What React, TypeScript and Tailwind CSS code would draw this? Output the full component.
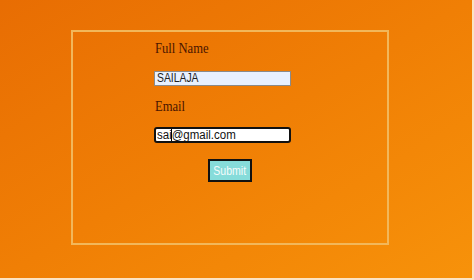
export default function App() {
  return (
    <div className="w-[474px] h-[280px] bg-[#fbe3c4] overflow-hidden">
      <div className="w-[472px] h-[278px] bg-gradient-to-br from-[#e86d03] via-[#f07f05] to-[#f7920a] pt-[30px] pl-[71px]">
        <div className="w-[318px] h-[215px] border-2 border-[#f2b75a] pl-[82px] pt-[8px] font-['Liberation_Serif',serif]">
          <div className="text-[14px] leading-[17px] text-[#4a1500] origin-left scale-x-[0.9]">Full Name</div>
          <div className="mt-[14px] -ml-[1px] w-[137px] h-[15px] bg-[#e8f0fe] border border-[#8a8a8a] flex items-center px-[2px]">
            <span className="font-['Liberation_Sans',sans-serif] text-[12.5px] leading-none text-[#222] origin-left scale-x-[0.83] inline-block">SAILAJA</span>
          </div>
          <div className="mt-[12px] text-[14px] leading-[17px] text-[#4a1500] origin-left scale-x-[0.9]">Email</div>
          <div className="mt-[12px] -ml-[1px] w-[137px] h-[16px] bg-white border-2 border-[#111] rounded-[3px] flex items-center px-[1px] relative">
            <span className="font-['Liberation_Sans',sans-serif] text-[12.5px] leading-none text-[#111] origin-left scale-x-[0.92] inline-block">sai@gmail.com</span>
            <span className="absolute left-[15px] top-[0px] w-[1px] h-[12px] bg-black" />
          </div>
          <div className="mt-[16px] ml-[53px] w-[44px] h-[23px] bg-[#86dcda] border-2 border-[#111] flex items-center justify-center">
            <span className="font-['Liberation_Sans',sans-serif] text-[12px] leading-none text-[#f4fbfb] scale-x-[0.88] inline-block">Submit</span>
          </div>
        </div>
      </div>
    </div>
  );
}
